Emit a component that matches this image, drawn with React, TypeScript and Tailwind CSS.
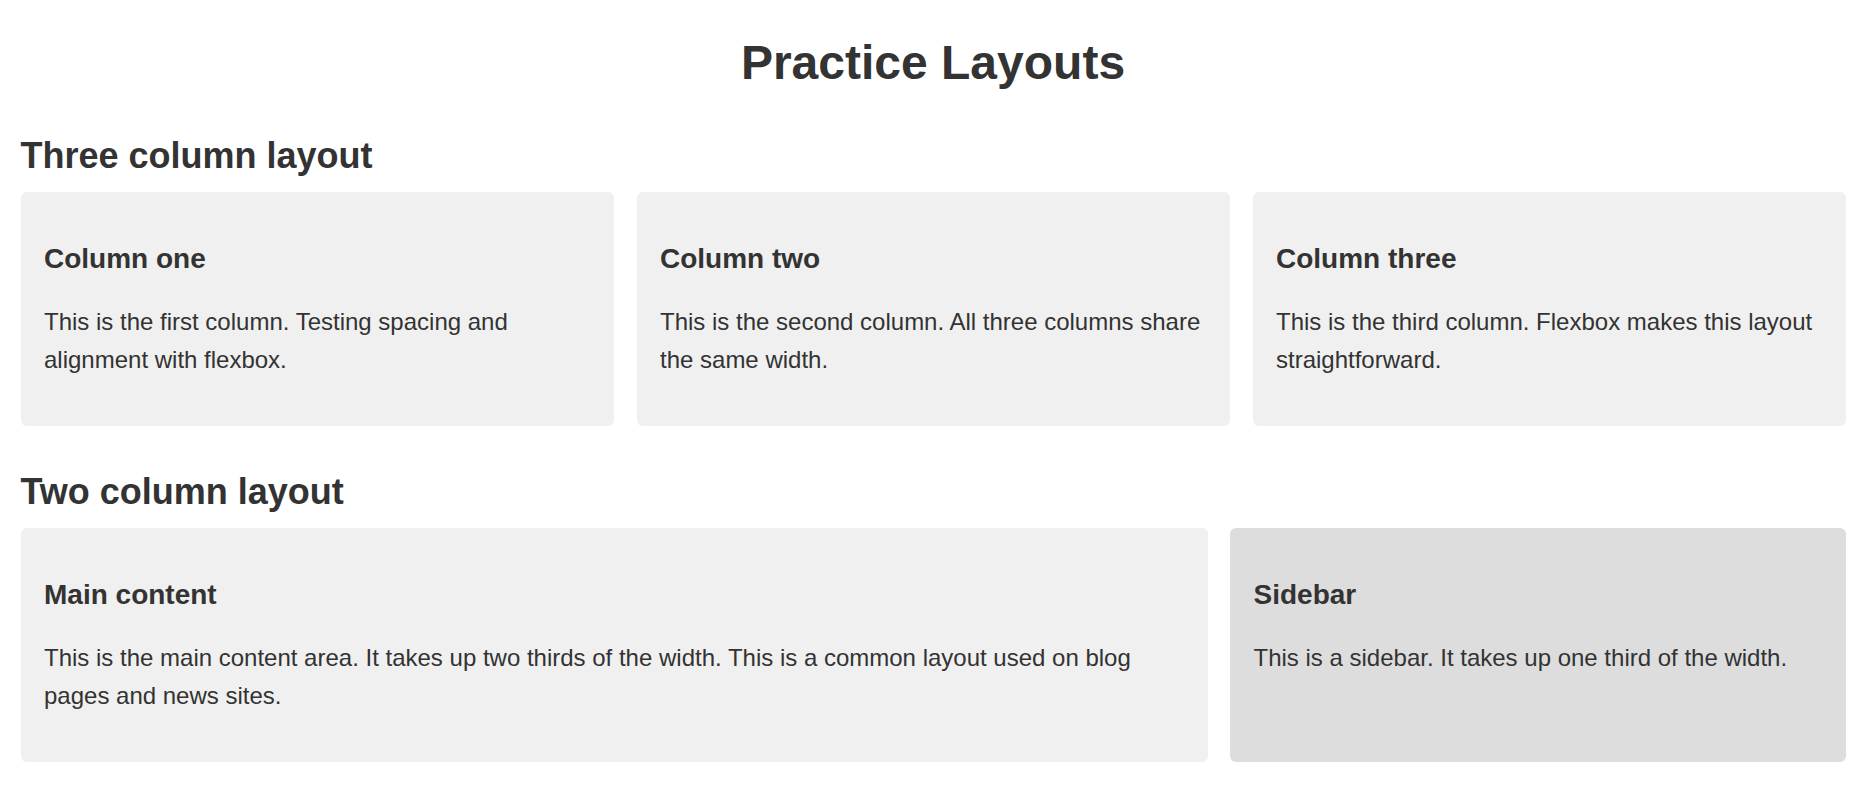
type Box = {
  title: string;
  text: string;
};

const threeColumns: Box[] = [
  {
    title: "Column one",
    text: "This is the first column. Testing spacing and alignment with flexbox.",
  },
  {
    title: "Column two",
    text: "This is the second column. All three columns share the same width.",
  },
  {
    title: "Column three",
    text: "This is the third column. Flexbox makes this layout straightforward.",
  },
];

function Card({ title, text, className }: Box & { className: string }) {
  return (
    <div className={`rounded-[6px] p-[23.5px] ${className}`}>
      <h3 className="mt-[27.5px] mb-[28px] text-[28px] leading-[32px] font-bold">
        {title}
      </h3>
      <p className="mb-[23px] text-[24px] leading-[1.6]">{text}</p>
    </div>
  );
}

export default function App() {
  return (
    <div className="min-h-screen bg-white px-[20.5px] pt-[35px] pb-[30px] font-['Liberation_Sans',Arial,sans-serif] text-[#333333]">
      <h1 className="text-center text-[48px] leading-[55px] font-bold">
        Practice Layouts
      </h1>

      {/* Three column section */}
      <h2 className="mt-[45px] mb-[16px] text-[36px] leading-[41px] font-bold">
        Three column layout
      </h2>
      <div className="flex gap-[23px]">
        {threeColumns.map((col) => (
          <Card key={col.title} {...col} className="flex-1 bg-[#f0f0f0]" />
        ))}
      </div>

      {/* Two column section */}
      <h2 className="mt-[44.5px] mb-[16px] text-[36px] leading-[41px] font-bold">
        Two column layout
      </h2>
      <div className="flex gap-[22.5px]">
        <Card
          title="Main content"
          text="This is the main content area. It takes up two thirds of the width. This is a common layout used on blog pages and news sites."
          className="flex-[2_1_0%] bg-[#f0f0f0]"
        />
        <Card
          title="Sidebar"
          text="This is a sidebar. It takes up one third of the width."
          className="w-[615.5px] shrink-0 bg-[#dddddd]"
        />
      </div>
    </div>
  );
}
